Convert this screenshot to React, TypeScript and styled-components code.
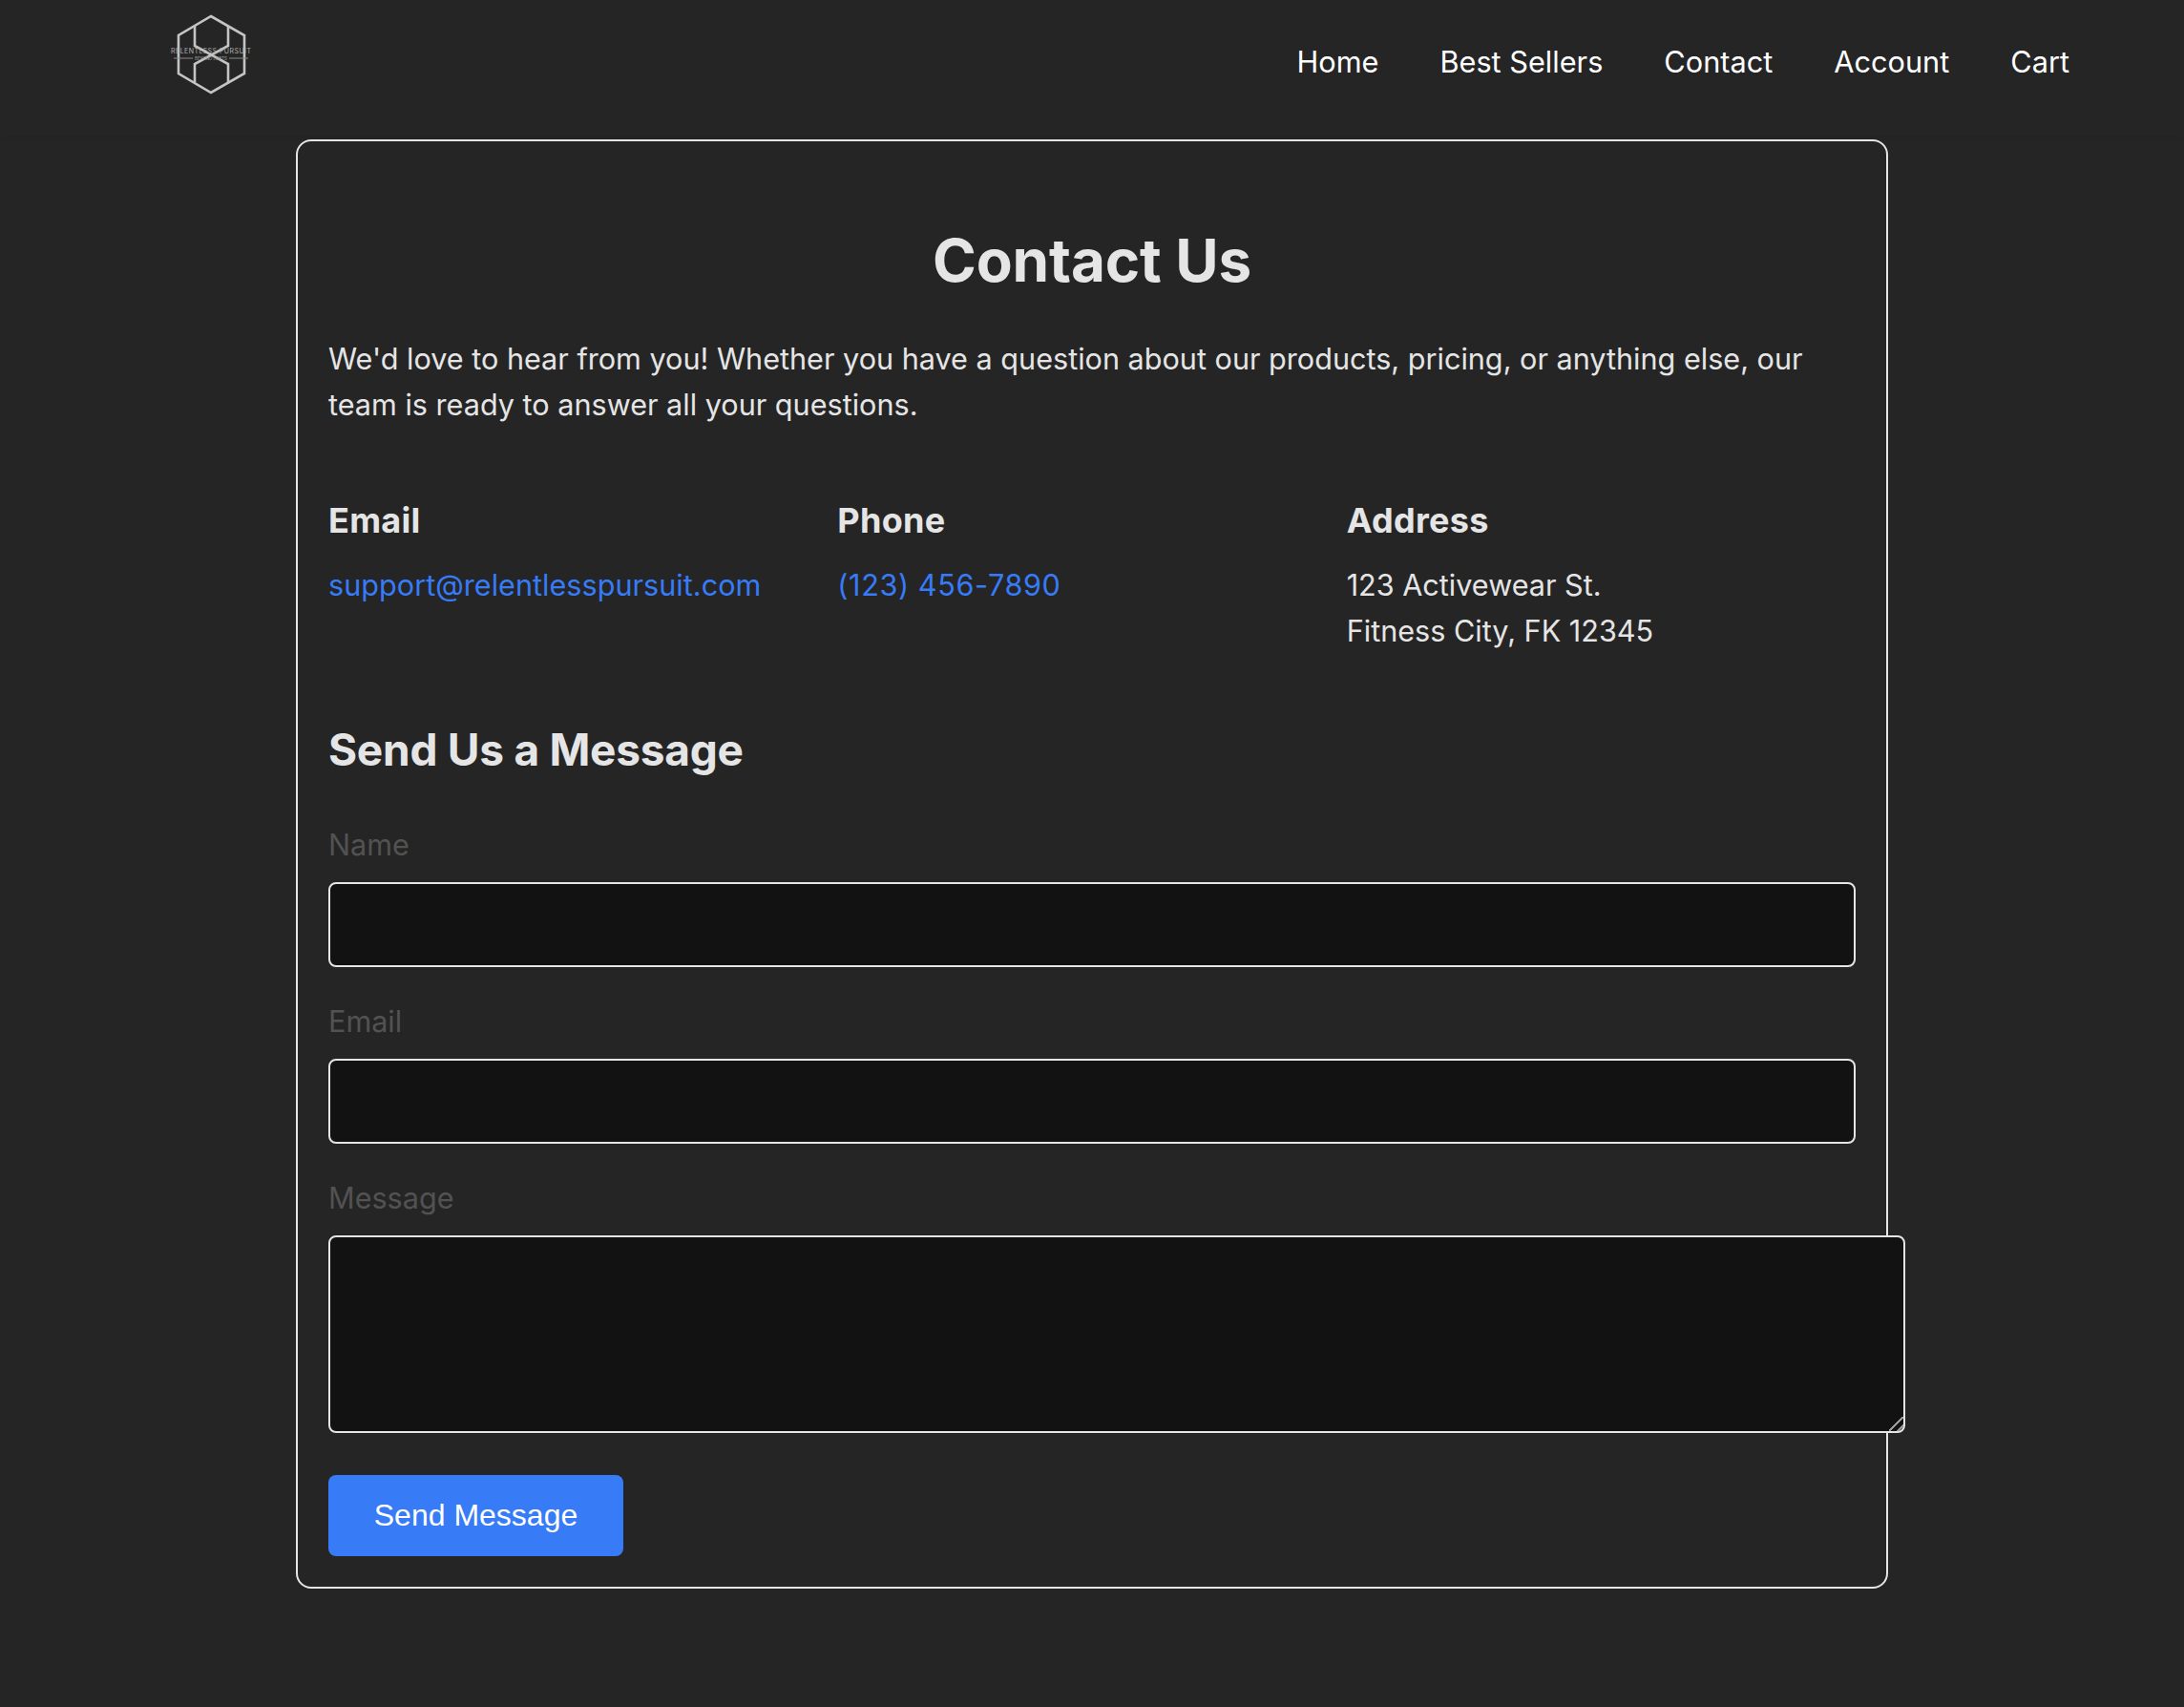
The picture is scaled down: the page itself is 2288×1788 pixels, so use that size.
import React from 'react';
import styled, { createGlobalStyle } from 'styled-components';

const GlobalStyle = createGlobalStyle`
  * { box-sizing: border-box; }
  html, body { margin: 0; padding: 0; background: #252525; }
  body { font-family: Inter, "Liberation Sans", sans-serif; color: #e5e5e5; }
`;

const navLinks = ['Home', 'Best Sellers', 'Contact', 'Account', 'Cart'];

const Logo: React.FC = () => (
  <LogoSvg viewBox="0 0 90 90" width="90" height="90">
    <g fill="none" stroke="#c4c4c4" strokeWidth="2.6">
      <path d="M45 7 L80 27 L80 67 L45 87 L11 67 L11 27 Z" />
      <path d="M28 17 L28 38 L63 57 L63 76" />
      <path d="M63 17 L63 38 L28 57 L28 76" />
    </g>
    <text x="3" y="46" textLength="84" fontSize="7" fill="#b0b0b0" fontFamily="Inter, sans-serif">RELENTLESS PURSUIT</text>
    <path d="M6 51 H26 M64 51 H84" stroke="#8a8a8a" strokeWidth="1" />
    <text x="45" y="53" textAnchor="middle" fontSize="4.4" fill="#a0a0a0" fontFamily="Inter, sans-serif">BEYOND LIMITS</text>
  </LogoSvg>
);

const App: React.FC = () => (
  <>
    <GlobalStyle />
    <Header>
      <Logo />
      <Nav>
        {navLinks.map(link => (
          <NavLink key={link} href="#">{link}</NavLink>
        ))}
      </Nav>
    </Header>
    <Card>
      <Title>Contact Us</Title>
      <Intro>
        We'd love to hear from you! Whether you have a question about our products, pricing, or anything else, our team is ready to answer all your questions.
      </Intro>
      <InfoGrid>
        <div>
          <InfoHeading>Email</InfoHeading>
          <InfoLink href="#">support@relentlesspursuit.com</InfoLink>
        </div>
        <div>
          <InfoHeading>Phone</InfoHeading>
          <InfoLink href="#" $spaced>(123) 456-7890</InfoLink>
        </div>
        <div>
          <InfoHeading>Address</InfoHeading>
          <InfoText>123 Activewear St.<br />Fitness City, FK 12345</InfoText>
        </div>
      </InfoGrid>
      <FormTitle>Send Us a Message</FormTitle>
      <form>
        <Field>
          <Label htmlFor="name">Name</Label>
          <Input id="name" type="text" />
        </Field>
        <Field>
          <Label htmlFor="email">Email</Label>
          <Input id="email" type="email" />
        </Field>
        <Field>
          <Label htmlFor="message">Message</Label>
          <TextArea id="message" />
        </Field>
        <SendButton type="button">Send Message</SendButton>
      </form>
    </Card>
  </>
);

const Header = styled.header`
  display: flex;
  justify-content: space-between;
  align-items: flex-start;
  height: 143px;
  margin-bottom: 3px;
  padding: 10px 120px 0 176px;
  box-shadow: 0 1px 3px rgba(0, 0, 0, 0.05);
`;

const LogoSvg = styled.svg`
  display: block;
`;

const Nav = styled.nav`
  display: flex;
  gap: 64px;
  padding-top: 31px;
`;

const NavLink = styled.a`
  color: #fff;
  font-size: 30.7px;
  line-height: 48px;
  text-decoration: none;
`;

const Card = styled.main`
  width: 1668px;
  margin: 0 auto;
  padding: 32px;
  border: 2px solid #e5e5e5;
  border-radius: 16px;
  background: #252525;
`;

const Title = styled.h1`
  margin: 63px 0 49px;
  font-size: 62px;
  line-height: 60px;
  font-weight: 700;
  letter-spacing: -0.15px;
  text-align: center;
`;

const Intro = styled.p`
  margin: 0 0 71px;
  font-size: 30.6px;
  line-height: 48px;
`;

const InfoGrid = styled.div`
  display: grid;
  grid-template-columns: repeat(3, 1fr);
  margin-bottom: 68px;
`;

const InfoHeading = styled.h3`
  margin: 0 0 18px;
  font-size: 36px;
  line-height: 52px;
  font-weight: 700;
  letter-spacing: 0.3px;
`;

const InfoLink = styled.a<{ $spaced?: boolean }>`
  display: block;
  color: #377bf7;
  font-size: 30.6px;
  line-height: 48px;
  letter-spacing: ${p => (p.$spaced ? '0.6px' : '0.02px')};
  text-decoration: none;
`;

const InfoText = styled.p`
  margin: 0;
  font-size: 30.6px;
  line-height: 48px;
`;

const FormTitle = styled.h2`
  margin: 0 0 44px;
  font-size: 46px;
  line-height: 64px;
  font-weight: 700;
  letter-spacing: -0.25px;
`;

const Field = styled.div`
  margin-bottom: 33px;

  &:last-of-type {
    margin-bottom: 44px;
  }
`;

const Label = styled.label`
  display: block;
  margin-bottom: 15px;
  color: #525252;
  font-size: 30.6px;
  line-height: 48px;
`;

const Input = styled.input`
  display: block;
  width: 100%;
  height: 89px;
  padding: 16px;
  border: 2px solid #e5e5e5;
  border-radius: 8px;
  background: #121212;
  color: #e5e5e5;
  font: inherit;
  outline: none;
`;

const TextArea = styled.textarea`
  display: block;
  width: 1652px;
  height: 207px;
  padding: 16px;
  border: 2px solid #e5e5e5;
  border-radius: 8px;
  background: #121212;
  color: #e5e5e5;
  font: inherit;
  outline: none;

  &::-webkit-resizer {
    background: linear-gradient(
      135deg,
      transparent 0 44%,
      #9a9a9a 44% 54%,
      transparent 54% 74%,
      #9a9a9a 74% 84%,
      transparent 84%
    );
  }
`;

const SendButton = styled.button`
  display: block;
  width: 309px;
  height: 85px;
  border: none;
  border-radius: 8px;
  background: #377bf7;
  color: #fff;
  font-family: "Liberation Sans", Arial, sans-serif;
  font-size: 32px;
`;

export default App;
